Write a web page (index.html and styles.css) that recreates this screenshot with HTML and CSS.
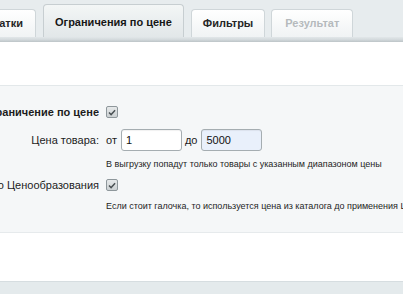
FILE: index.html
```html
<!DOCTYPE html>
<html lang="ru">
<head>
<meta charset="utf-8">
<title>Ограничения по цене</title>
<link rel="stylesheet" href="styles.css">
</head>
<body>
<div class="page">
  <div class="tabbar">
    <div class="tab-clip"><div class="tab">Остатки</div></div>
    <div class="tab tab-active">Ограничения по цене</div>
    <div class="tab">Фильтры</div>
    <div class="tab tab-disabled">Результат</div>
  </div>
  <div class="tabline"></div>
  <div class="spacer-top"></div>
  <div class="section">
    <div class="row row-check">
      <div class="label label-bold"><span>Ограничение по цене</span></div>
      <div class="field"><span class="checkbox"><svg viewBox="0 0 11 11" width="11" height="11"><path d="M2.2 5.5 L4.5 7.8 L8.9 3.1" fill="none" stroke="#4a5154" stroke-width="1.6"/></svg></span></div>
    </div>
    <div class="row row-input">
      <div class="label"><span>Цена товара:</span></div>
      <div class="field range">
        <span>от</span>
        <input class="inp" type="text" value="1">
        <span class="to">до</span>
        <input class="inp inp-filled" type="text" value="5000">
      </div>
    </div>
    <div class="row row-hint">
      <div class="label"></div>
      <div class="hint">В выгрузку попадут только товары с указанным диапазоном цены</div>
    </div>
    <div class="row row-check2">
      <div class="label"><span>Цена до Ценообразования</span></div>
      <div class="field"><span class="checkbox"><svg viewBox="0 0 11 11" width="11" height="11"><path d="M2.2 5.5 L4.5 7.8 L8.9 3.1" fill="none" stroke="#4a5154" stroke-width="1.6"/></svg></span></div>
    </div>
    <div class="row row-hint2">
      <div class="label"></div>
      <div class="hint">Если стоит галочка, то используется цена из каталога до применения Ценообразования</div>
    </div>
  </div>
  <div class="spacer-bottom"></div>
  <div class="footer"></div>
</div>
</body>
</html>
```
FILE: styles.css
```css
html, body {
  margin: 0;
  padding: 0;
  width: 403px;
  height: 294px;
  overflow: hidden;
  background: #fff;
}
.page {
  font-family: "Liberation Sans", Arial, sans-serif;
  color: #1c1c1c;
  width: 403px;
  overflow: hidden;
}
.tabbar {
  height: 37px;
  background: #e7ecee;
  display: flex;
  align-items: flex-end;
  gap: 7px;
  white-space: nowrap;
}
.tab-clip {
  width: 36px;
  flex: none;
  display: flex;
  justify-content: flex-end;
  overflow: hidden;
}
.tab {
  flex: none;
  box-sizing: border-box;
  height: 28px;
  line-height: 27px;
  padding: 0 11px;
  font-size: 11px;
  font-weight: bold;
  color: #262626;
  background: linear-gradient(#ffffff, #f0f3f4);
  border: 1px solid #cfd6d9;
  border-bottom: none;
  border-radius: 4px 4px 0 0;
}
.tab-clip .tab {
  padding-right: 12px;
}
.tab-active {
  height: 33px;
  padding: 4px 11px 0 11px;
  color: #161616;
  background: linear-gradient(#f3f6f6, #e2e7e9);
  border-color: #c7ced1;
}
.tab-disabled {
  color: #b5babd;
  padding: 0 13px;
  margin-left: -1px;
}
.tabline {
  height: 5px;
  background: linear-gradient(#e2e7e9, #d4dadd 50%, #bcc4c7);
}
.spacer-top {
  height: 43px;
  background: #fff;
  border-bottom: 1px solid #e3e8ea;
}
.section {
  background: #f5f7f8;
  border-bottom: 1px solid #e6eaec;
  padding: 16px 0 20px 0;
  margin-left: -100px;
  display: flex;
  flex-direction: column;
}
.row {
  display: grid;
  grid-template-columns: 199px 1fr;
  column-gap: 7px;
  align-items: center;
  white-space: nowrap;
}
.label {
  display: flex;
  justify-content: flex-end;
  font-size: 11px;
  overflow: hidden;
}
.label span {
  flex: none;
}
.label-bold {
  font-weight: bold;
}
.row-check { height: 20px; }
.row-input { height: 22px; margin-top: 7px; }
.row-hint { height: 12px; margin-top: 7px; }
.row-check2 { height: 20px; margin-top: 5px; }
.row-hint2 { height: 12px; margin-top: 5px; }
.field {
  display: flex;
  align-items: center;
}
.range {
  gap: 4px;
  font-size: 11px;
}
.range .to {
  margin-left: -1px;
}
.checkbox {
  box-sizing: border-box;
  width: 12px;
  height: 12px;
  border: 1px solid #8e979b;
  border-radius: 2px;
  background: linear-gradient(#e6e9ea, #ccd1d3);
  display: flex;
  align-items: center;
  justify-content: center;
}
.checkbox svg {
  display: block;
}
.inp {
  box-sizing: border-box;
  width: 61px;
  height: 22px;
  margin: 0;
  border: 1px solid #a5adb1;
  border-radius: 3px;
  padding: 0 4px;
  font-family: "Liberation Sans", Arial, sans-serif;
  font-size: 11px;
  color: #111;
  background: #fff;
  box-shadow: inset 0 1px 1px rgba(0,0,0,0.06);
}
.inp-filled {
  background: #e9f0fb;
}
.hint {
  font-size: 9px;
  line-height: 12px;
  color: #1e1e1e;
}
.spacer-bottom {
  height: 48px;
  background: #fff;
}
.footer {
  height: 14px;
  background: #e4eaec;
  border-top: 1px solid #d6dde0;
}
```
